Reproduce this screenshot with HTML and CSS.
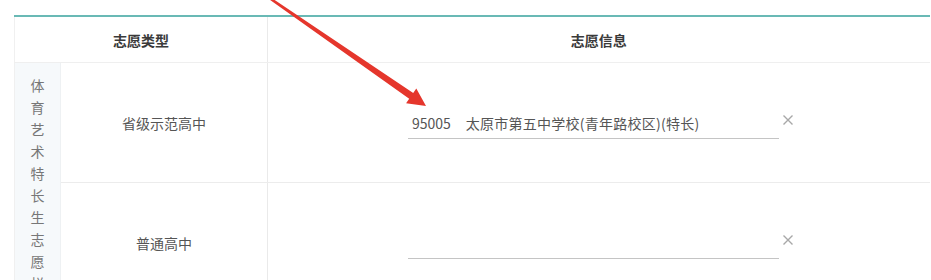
FILE: index.html
```html
<!DOCTYPE html>
<html lang="zh-CN">
<head>
<meta charset="utf-8">
<link rel="stylesheet" href="styles.css">
</head>
<body>
<div class="page">
  <table class="vol">
    <colgroup>
      <col class="c-side">
      <col class="c-type">
      <col class="c-info">
    </colgroup>
    <thead>
      <tr>
        <th colspan="2">志愿类型</th>
        <th>志愿信息</th>
      </tr>
    </thead>
    <tbody>
      <tr>
        <td rowspan="2" class="side"><div class="vtext">体育艺术特长生志愿栏</div></td>
        <td class="type">省级示范高中</td>
        <td class="info">
          <div class="field">
            <div class="input"><span class="code">95005</span><span class="name">太原市第五中学校(青年路校区)(特长)</span></div>
            <svg class="clear" width="12" height="12" viewBox="0 0 12 12"><path d="M1.5 1.5L10.5 10.5M10.5 1.5L1.5 10.5" stroke="#a8a8a8" stroke-width="1.4" fill="none"/></svg>
          </div>
        </td>
      </tr>
      <tr>
        <td class="type">普通高中</td>
        <td class="info">
          <div class="field">
            <div class="input"></div>
            <svg class="clear" width="12" height="12" viewBox="0 0 12 12"><path d="M1.5 1.5L10.5 10.5M10.5 1.5L1.5 10.5" stroke="#a8a8a8" stroke-width="1.4" fill="none"/></svg>
          </div>
        </td>
      </tr>
    </tbody>
  </table>
</div>
<svg class="arrow" width="931" height="280" viewBox="0 0 931 280">
  <polygon points="268.7,-4 413.2,92.9 416.3,88.4 426,106 406.1,103.2 409.2,98.7 267.3,-2" fill="#e5362c"/>
</svg>
</body>
</html>
```
FILE: styles.css
```css
html, body {
  margin: 0;
  padding: 0;
  background: #ffffff;
  overflow: hidden;
}
body {
  width: 931px;
  height: 280px;
  position: relative;
  font-family: "Noto Sans CJK SC", "Noto Sans", sans-serif;
  font-size: 14px;
  color: #555;
}
.page {
  padding: 15px 0 0 14px;
}
.vol {
  border-collapse: collapse;
  table-layout: fixed;
  width: 915px;
  border-top: 2px solid #69b9b5;
}
.c-side { width: 46px; }
.c-type { width: 207px; }
.c-info { width: 662px; }

.vol th {
  height: 45px;
  padding: 0;
  font-weight: bold;
  color: #3a3a3a;
  font-size: 14px;
  border-bottom: 1px solid #efefef;
  border-left: 1px solid #eaeaea;
  text-align: center;
  vertical-align: middle;
}
.vol th:first-child {
  border-left: 1px solid #f0f0f0;
}
.vol td {
  padding: 0;
  height: 119px;
  border-bottom: 1px solid #ececec;
  border-left: 1px solid #eaeaea;
  vertical-align: middle;
  text-align: center;
}
.vol td.side {
  background: #f6f9fb;
  border-left: 1px solid #f0f0f0;
  border-right: 1px solid #eef1f3;
  vertical-align: top;
}
.vtext {
  width: 14px;
  margin: 11px auto 0;
  font-size: 14px;
  line-height: 22px;
  color: #777;
  word-break: break-all;
}
.vol td.type {
  color: #555;
  border-left: none;
}
.vol td.info {
  text-align: left;
}
.field {
  display: flex;
  align-items: center;
  padding-left: 140px;
}
.input {
  width: 367px;
  height: 31px;
  padding-left: 4px;
  border-bottom: 1px solid #c4c4c4;
  display: flex;
  align-items: center;
  padding-top: 1px;
  color: #555;
  font-size: 14px;
}
.code {
  margin-right: 15px;
}
.name {
  letter-spacing: 0.25px;
}
.clear {
  margin-left: 3px;
  margin-top: -5px;
}
.arrow {
  position: absolute;
  left: 0;
  top: 0;
  pointer-events: none;
}
```
